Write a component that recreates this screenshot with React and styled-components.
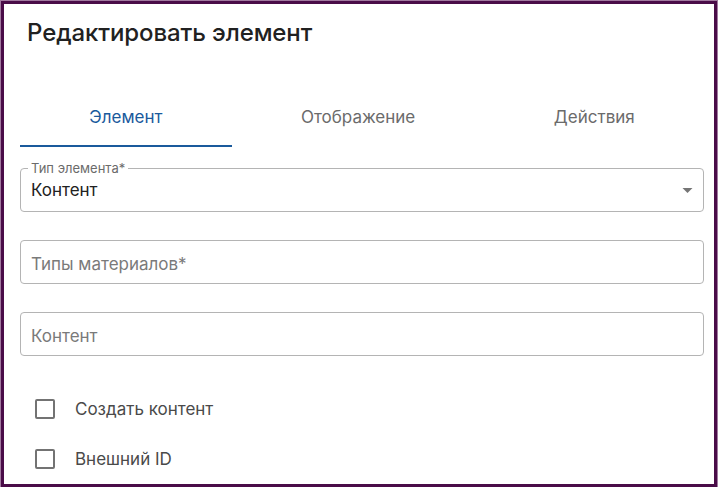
import React from 'react';
import styled, { createGlobalStyle } from 'styled-components';

const GlobalStyle = createGlobalStyle`
  html, body {
    margin: 0;
    padding: 0;
    background: #ffffff;
  }
  body {
    font-family: Inter, "Noto Sans", sans-serif;
  }
  * {
    box-sizing: border-box;
  }
`;

const tabs = ['Элемент', 'Отображение', 'Действия'];

const App = () => {
  return (
    <>
      <GlobalStyle />
      <Frame>
        <Title>Редактировать элемент</Title>
        <Content>
          <TabBar>
            {tabs.map((tab, i) => (
              <Tab key={tab} active={i === 0}>
                {tab}
              </Tab>
            ))}
          </TabBar>

          <Fields>
            <Field>
              <Legend>Тип элемента*</Legend>
              <Value>Контент</Value>
              <Arrow viewBox="0 0 10 5">
                <path d="M0 0 L10 0 L5 5 Z" fill="#757575" />
              </Arrow>
            </Field>
            <Field>
              <Placeholder>Типы материалов*</Placeholder>
            </Field>
            <Field>
              <Placeholder>Контент</Placeholder>
            </Field>
          </Fields>

          <Checks>
            <CheckRow>
              <Box />
              <CheckLabel>Создать контент</CheckLabel>
            </CheckRow>
            <CheckRow>
              <Box />
              <CheckLabel>Внешний ID</CheckLabel>
            </CheckRow>
          </Checks>
        </Content>
      </Frame>
    </>
  );
};

export default App;

const Frame = styled.div`
  margin: 1px 0 0 1px;
  width: 716px;
  height: 486px;
  border: 3px solid #4a0c48;
  box-shadow: 0 0 0 1px #a27aa0;
  background: #ffffff;
  overflow: hidden;
  display: flex;
  flex-direction: column;
`;

const Title = styled.h2`
  margin: 0;
  padding: 14px 23px 0 23px;
  height: 58px;
  font-size: 24px;
  font-weight: 500;
  color: #212121;
  line-height: 30px;
  letter-spacing: -0.1px;
`;

const Content = styled.div`
  padding: 0 10px 0 16px;
  display: flex;
  flex-direction: column;
`;

const TabBar = styled.div`
  display: flex;
  margin-top: 29px;
`;

const Tab = styled.div`
  flex: 1 1 auto;
  height: 56px;
  display: flex;
  align-items: center;
  justify-content: center;
  padding-bottom: 2px;
  font-size: 17px;
  color: ${(p) => (p.active ? '#1a5a9c' : '#6b6b6b')};
  border-bottom: 2px solid ${(p) => (p.active ? '#1a5a9c' : 'transparent')};
`;

const Fields = styled.div`
  display: flex;
  flex-direction: column;
  gap: 28px;
  margin-top: 21px;
`;

const Field = styled.div`
  position: relative;
  height: 44px;
  border: 1px solid #b4b4b4;
  border-radius: 4px;
  display: flex;
  align-items: center;
  padding: 0 10px;
`;

const Legend = styled.span`
  position: absolute;
  top: -8px;
  left: 7px;
  padding: 0 3px;
  background: #ffffff;
  font-size: 13px;
  line-height: 15px;
  color: #6b6b6b;
`;

const Value = styled.span`
  font-size: 17px;
  color: #212121;
  margin-top: -1px;
`;

const Placeholder = styled.span`
  font-size: 17px;
  color: #7a7a7a;
  margin-top: 4px;
`;

const Arrow = styled.svg`
  position: absolute;
  right: 10px;
  top: 19px;
  width: 11px;
  height: 5px;
`;

const Checks = styled.div`
  display: flex;
  flex-direction: column;
  gap: 30px;
  margin-top: 43px;
  padding-left: 15px;
`;

const CheckRow = styled.label`
  display: flex;
  align-items: center;
  gap: 20px;
  height: 20px;
`;

const Box = styled.span`
  width: 20px;
  height: 20px;
  border: 2px solid #737373;
  border-radius: 2px;
  flex-shrink: 0;
`;

const CheckLabel = styled.span`
  font-size: 17px;
  color: #4a4a4a;
`;
